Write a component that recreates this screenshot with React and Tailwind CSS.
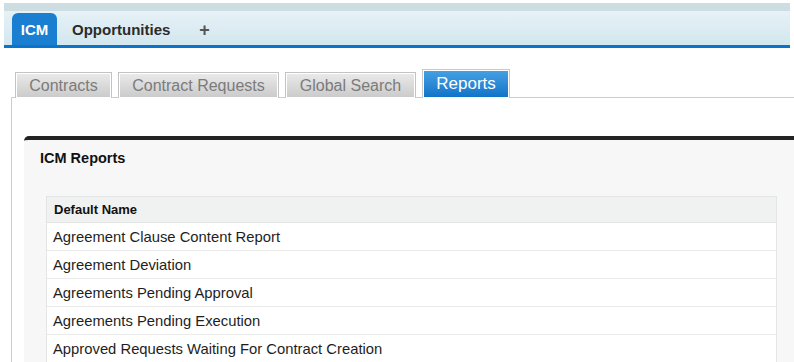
import React from "react";

const tabs = [
    { label: "Contracts", w: "w-[97px]" },
    { label: "Contract Requests", w: "w-[161px]" },
    { label: "Global Search", w: "w-[131px]" },
];

const reports = [
    "Agreement Clause Content Report",
    "Agreement Deviation",
    "Agreements Pending Approval",
    "Agreements Pending Execution",
    "Approved Requests Waiting For Contract Creation",
];

function TopNav() {
    return (
        <div className="mx-1 mt-[3px]">
            <div className="h-2 bg-[#cddde2]" />
            <div className="h-[34px] flex items-end bg-gradient-to-b from-[#e6f2f7] to-[#d3e7ee]">
                <div className="ml-2 w-[45px] h-[32px] rounded-t-[6px] bg-[#1a7fd0] text-white font-bold text-[15px] flex items-center justify-center pt-[3px]">
                    ICM
                </div>
                <div className="ml-[15px] h-[32px] flex items-center pt-[3px] font-bold text-[15px] text-[#2b2b2b]">
                    Opportunities
                </div>
                <div className="ml-[29px] h-[32px] flex items-center pt-[3px] font-bold text-[18px] text-[#555]">
                    +
                </div>
            </div>
            <div className="h-[3px] bg-[#0b73c9]" />
        </div>
    );
}

function SubTabs() {
    return (
        <div className="flex items-end gap-[6px] pl-[15px] h-[50px]">
            {tabs.map((t) => (
                <div
                    key={t.label}
                    className={`${t.w} h-[26px] border border-b-0 border-[#c3c3c3] bg-white p-px`}
                >
                    <div className="h-full bg-gradient-to-b from-[#e9e9e9] to-[#cbcbcb] text-[#7b7b7b] text-[16px] flex items-center justify-center pt-px">
                        {t.label}
                    </div>
                </div>
            ))}
            <div className="w-[88px] h-[29px] border border-b-0 border-[#c9c9c9] bg-white p-px">
                <div className="h-full bg-gradient-to-b from-[#44a0e3] to-[#0f74c8] text-white text-[17px] flex items-center justify-center pb-px">
                    Reports
                </div>
            </div>
        </div>
    );
}

export default function App() {
    return (
        <div className="w-[794px] h-[362px] overflow-hidden bg-white font-['Liberation_Sans',Arial,sans-serif]">
            <TopNav />
            <SubTabs />
            <div className="ml-[11px] -mt-px border-l border-t border-[#cdcdcd] h-[300px] pl-[12px] pt-[38px]">
                <div className="border-t-4 border-[#232323] rounded-tl-[5px] bg-[#f7f7f7] h-full">
                    <div className="h-[38px] flex items-center pl-4 font-bold text-[14.5px] text-[#111]">
                        ICM Reports
                    </div>
                    <div className="ml-[22px] mt-[18px] w-[731px] border border-[#e4e6e6] bg-white">
                        <div className="h-[26px] bg-[#f0f2f2] border-b border-[#e4e6e6] flex items-center pl-[7px] pt-px font-bold text-[13px] text-[#111]">
                            Default Name
                        </div>
                        {reports.map((r) => (
                            <div
                                key={r}
                                className="h-[28px] border-b border-[#ebebeb] flex items-center pl-[6px] pt-[2px] text-[14.8px] text-[#1e1e1e]"
                            >
                                {r}
                            </div>
                        ))}
                    </div>
                </div>
            </div>
        </div>
    );
}
